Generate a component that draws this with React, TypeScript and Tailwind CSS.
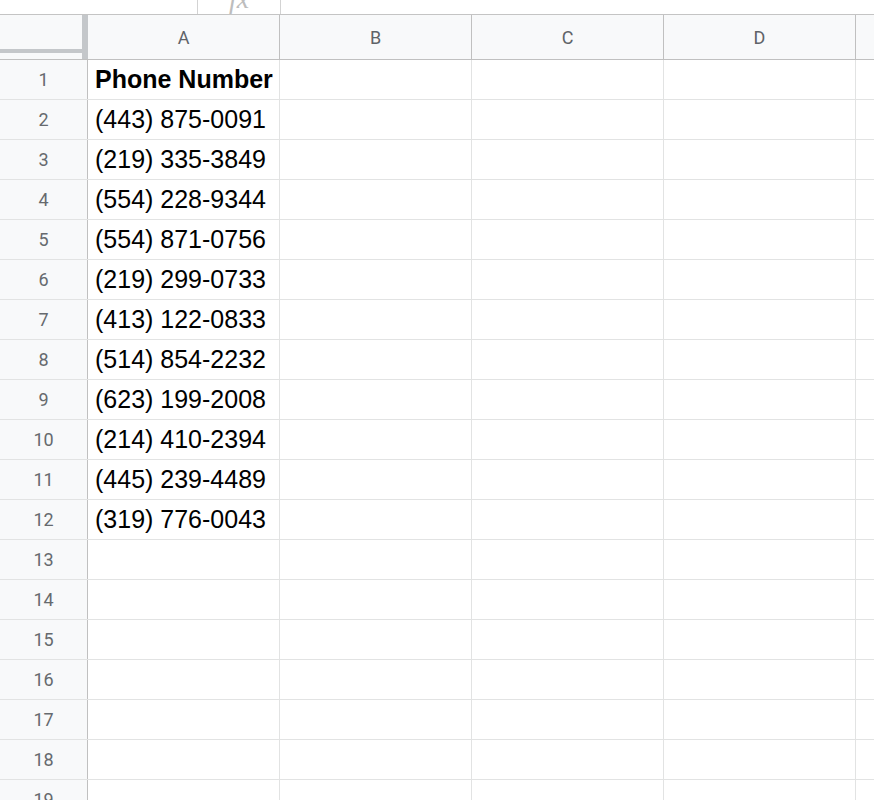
import React from 'react';

const phones = [
  '(443) 875-0091',
  '(219) 335-3849',
  '(554) 228-9344',
  '(554) 871-0756',
  '(219) 299-0733',
  '(413) 122-0833',
  '(514) 854-2232',
  '(623) 199-2008',
  '(214) 410-2394',
  '(445) 239-4489',
  '(319) 776-0043'
];

const columns = ['A', 'B', 'C', 'D'];

const rows: string[] = ['Phone Number', ...phones];
while (rows.length < 19) rows.push('');

const App: React.FC = () => {
  return (
    <div className="w-[874px] h-[800px] overflow-hidden bg-white font-['Roboto',sans-serif]">
      {/* Formula bar remnant */}
      <div className="h-[15px] flex border-b border-[#c4c4c4] overflow-hidden">
        <div className="w-[197px]" />
        <div className="w-[84px] border-l border-r border-[#d3d3d3] flex justify-center">
          <span className="-mt-[15px] text-[28px] italic font-['Liberation_Serif',serif] text-[#bdbdbd] leading-none">
            fx
          </span>
        </div>
      </div>

      {/* Column headers */}
      <div className="h-[45px] flex bg-[#f8f9fa] border-b border-[#c0c0c0]">
        <div className="w-[88px] flex shrink-0">
          <div className="flex-1 flex flex-col">
            <div className="flex-1" />
            <div className="h-[4px] bg-[#c4c7ca]" />
            <div className="h-[6px]" />
          </div>
          <div className="w-[6px] bg-[#c4c7ca]" />
        </div>
        {columns.map((c) => (
          <div
            key={c}
            className="w-[192px] shrink-0 border-r border-[#c0c0c0] flex items-center justify-center text-[18px] text-[#5f6368]"
          >
            {c}
          </div>
        ))}
        <div className="flex-1" />
      </div>

      {/* Grid rows */}
      {rows.map((value, i) => (
        <div key={i} className="h-[40px] flex border-b border-[#e2e3e3]">
          <div className="w-[88px] shrink-0 bg-[#f8f9fa] border-r border-[#c0c0c0] flex items-center justify-center text-[18px] text-[#666a6e]">
            {i + 1}
          </div>
          {columns.map((c, j) => (
            <div
              key={c}
              className={`w-[192px] shrink-0 border-r border-[#e2e3e3] flex items-center pl-[7px] pt-[1px] text-[25px] text-black font-['Liberation_Sans',Arial,sans-serif] whitespace-nowrap ${
                i === 0 ? 'font-bold' : ''
              }`}
            >
              {j === 0 ? value : ''}
            </div>
          ))}
          <div className="flex-1" />
        </div>
      ))}
    </div>
  );
};

export default App;
